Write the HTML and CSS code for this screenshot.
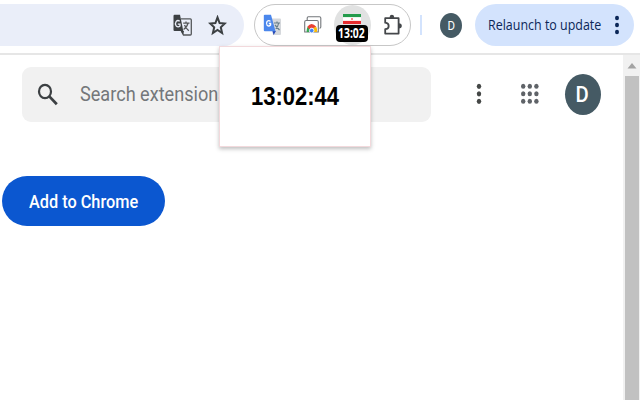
FILE: index.html
```
<!DOCTYPE html>
<html lang="en">
<head>
<meta charset="utf-8">
<title>Clock extension</title>
<link rel="stylesheet" href="styles.css">
</head>
<body>
<header class="toolbar">
  <div class="address">
    <svg class="translate" width="20" height="23" viewBox="0 0 20 23">
      <path d="M1.5 .8H7L10.3 17H1.5Q.5 17 .5 16V2Q.5 .8 1.5 .8Z" fill="#3c4043"/>
      <path d="M8 4.8H17.3Q18.3 4.8 18.3 6V20Q18.3 21 17.3 21H10.5L8.3 17" fill="none" stroke="#55585b" stroke-width="1.3"/>
      <path d="M7.8 17H11L10.2 20.8Z" fill="#3c4043"/>
      <path d="M6.7 7.2Q4.8 5.8 3.2 7.4Q1.6 9.7 3.2 12Q5.2 13.8 7 12V10.2H4.8" fill="none" stroke="#eceffa" stroke-width="1.3"/>
      <path d="M10.2 9.2H16.5M13 7.5V9.2M15 9.2Q14 13.5 10.6 15.5M11.5 11Q12.8 14.2 15.8 16.8" fill="none" stroke="#55585b" stroke-width="1.3"/>
    </svg>
    <svg class="star" width="19" height="21" viewBox="0 0 19 21">
      <path d="M9.5 2.4L11.6 8L16.8 8.5L12.8 12.3L14.1 18L9.5 15L4.9 18L6.2 12.3L2.2 8.5L7.4 8Z" fill="none" stroke="#3c4043" stroke-width="2"/>
    </svg>
  </div>
  <div class="extensions">
    <svg width="20" height="23" viewBox="0 0 20 23">
      <path d="M7 4.5H17Q18 4.5 18 5.5V20Q18 21 17 21H10Z" fill="#d5d8dc"/>
      <path d="M9.5 17H13L10.6 21Z" fill="#2749b8"/>
      <path d="M1.8 .8H8L12.5 17.3H1.8Q.8 17.3 .8 16.3V1.8Q.8 .8 1.8 .8Z" fill="#4b87ec"/>
      <path d="M7.5 7.4Q5.8 5.8 4.1 7.4Q2.9 9.5 4.1 11.2Q5.9 12.8 7.6 11V9.5H5.8" fill="none" stroke="#fff" stroke-width="1.3"/>
      <path d="M11 9H17M14 7.5V9M15.7 9Q15 13 12.6 14.5M12 11L16.5 16" fill="none" stroke="#667f8b" stroke-width="1.2"/>
    </svg>
    <svg width="20" height="23" viewBox="0 0 20 23">
      <path d="M4.2 6V4Q4.2 2.8 5.4 2.8H16.5Q17.8 2.8 17.8 4V13Q17.8 14.2 16.5 14.2" fill="#fff" stroke="#73777b" stroke-width="1.1"/>
      <path d="M1.7 18V8Q1.7 6.5 3.1 6.5H14Q15.3 6.5 15.3 8V18Z" fill="#fff" stroke="#73777b" stroke-width="1.1"/>
      <path d="M3.7 18Q3.4 13.5 5.7 11.8L7.2 15.2L6.2 18Z" fill="#35a852"/>
      <path d="M4.4 12.7Q8.5 7.2 13.3 12.8L10.8 14.8Q8.5 12.5 6.4 15.5Z" fill="#e94235"/>
      <path d="M10.8 13.2H13.6Q14.3 15.5 13.9 18H10.5Z" fill="#fabb05"/>
      <ellipse cx="8.7" cy="16.6" rx="2.3" ry="2.3" fill="#4285f4" stroke="#fff" stroke-width=".8"/>
    </svg>
    <div class="active">
      <svg class="flag" width="18" height="10" viewBox="0 0 18 10">
        <path d="M0 0H18V10H0Z" fill="#fff"/>
        <path d="M0 0H18V3.1H0Z" fill="#239b4b"/>
        <path d="M0 6.9H18V10H0Z" fill="#e42c30"/>
        <circle cx="9" cy="5" r="1" fill="#ec6b6b"/>
      </svg>
      <span class="badge"><span class="badge-text">13:02</span></span>
    </div>
    <svg class="puzzle" width="20" height="23" viewBox="0 0 20 23">
      <path d="M2.2 4.2H15.6V19.6H2.2V15.2Q5.7 15 5.7 12Q5.7 9 2.2 8.7Z" fill="none" stroke="#44474a" stroke-width="1.8" stroke-linejoin="round"/>
      <path d="M6.7 4V2.8Q6.8 .8 8.9 .8Q11 .8 11.1 2.8V4ZM15.8 9.2Q18.8 9.2 18.8 11.8Q18.8 14.4 15.8 14.4Z" fill="#44474a"/>
    </svg>
  </div>
  <span class="divider"></span>
  <span class="avatar small"><span>D</span></span>
  <div class="relaunch">
    <span class="relaunch-text">Relaunch to update</span>
    <svg class="more" width="6" height="20" viewBox="0 0 6 20" fill="#0b2758">
      <ellipse cx="3" cy="3" rx="2" ry="2.2"/><ellipse cx="3" cy="10" rx="2" ry="2.2"/><ellipse cx="3" cy="17" rx="2" ry="2.2"/>
    </svg>
  </div>
</header>
<div class="page">
  <main class="content">
    <div class="store-bar">
      <div class="search">
        <svg width="22" height="23" viewBox="0 0 22 23">
          <ellipse cx="8" cy="8.5" rx="6" ry="6.6" fill="none" stroke="#3c4043" stroke-width="2.2"/>
          <path d="M12.3 13.4L19.8 21.3" stroke="#3c4043" stroke-width="2.7"/>
        </svg>
        <span class="search-text">Search extensions</span>
      </div>
      <svg class="store-more" width="6" height="22" viewBox="0 0 6 22" fill="#444746">
        <ellipse cx="3" cy="3.3" rx="2.2" ry="2.6"/><ellipse cx="3" cy="10.8" rx="2.2" ry="2.6"/><ellipse cx="3" cy="18.3" rx="2.2" ry="2.6"/>
      </svg>
      <svg class="apps" width="20" height="22" viewBox="0 0 20 22" fill="#5f6368">
        <ellipse cx="3.2" cy="3.3" rx="2.2" ry="2.5"/><ellipse cx="9.8" cy="3.3" rx="2.2" ry="2.5"/><ellipse cx="16.4" cy="3.3" rx="2.2" ry="2.5"/>
        <ellipse cx="3.2" cy="10.8" rx="2.2" ry="2.5"/><ellipse cx="9.8" cy="10.8" rx="2.2" ry="2.5"/><ellipse cx="16.4" cy="10.8" rx="2.2" ry="2.5"/>
        <ellipse cx="3.2" cy="18.3" rx="2.2" ry="2.5"/><ellipse cx="9.8" cy="18.3" rx="2.2" ry="2.5"/><ellipse cx="16.4" cy="18.3" rx="2.2" ry="2.5"/>
      </svg>
      <span class="avatar large"><span>D</span></span>
    </div>
    <div class="add"><span class="add-text">Add to Chrome</span></div>
  </main>
  <div class="scrollbar">
    <svg width="10" height="6" viewBox="0 0 10 6"><path d="M5 0L9.5 5.5H.5Z" fill="#a3a3a3"/></svg>
    <span class="thumb"></span>
  </div>
</div>
<div class="popup"><span class="clock">13:02:44</span></div>
</body>
</html>
```
FILE: styles.css
```
* { box-sizing: border-box; }
body {
  margin: 0;
  width: 640px;
  height: 400px;
  overflow: hidden;
  background: #fff;
  font-family: Roboto, "Liberation Sans", sans-serif;
}
svg { display: block; flex: none; }
.toolbar {
  display: flex;
  align-items: center;
  height: 55px;
  padding-bottom: 3px;
  border-bottom: 2px solid #e6e6e6;
}
.address {
  display: flex;
  align-items: center;
  width: 243.5px;
  height: 42px;
  padding-left: 172.5px;
  border-radius: 0 21px 21px 0;
  background: #eaeef9;
}
.star { margin-left: 15.5px; }
.extensions {
  display: flex;
  align-items: center;
  width: 157px;
  height: 42px;
  margin-left: 10px;
  padding-left: 8px;
  border: 1px solid #c7c7c7;
  border-radius: 21px;
  gap: 20px;
}
.active {
  position: relative;
  width: 37px;
  height: 40px;
  margin-left: -9px;
  border-radius: 50%;
  background: #e1e2e2;
}
.flag { margin: 9px 0 0 9px; }
.badge {
  position: absolute;
  left: 2px;
  top: 20px;
  display: flex;
  align-items: center;
  justify-content: center;
  width: 32px;
  height: 17px;
  border-radius: 4px;
  background: #000;
}
.badge-text {
  color: #fff;
  font: bold 13.5px/17px "Open Sans", sans-serif;
  transform: scaleX(.77);
}
.puzzle { margin-left: -8px; }
.divider {
  width: 2px;
  height: 20px;
  margin-left: 9.5px;
  background: #d3e3fd;
}
.avatar {
  display: flex;
  align-items: center;
  justify-content: center;
  flex: none;
  border-radius: 50%;
  background: #455a64;
  color: #fff;
}
.small {
  width: 22px;
  height: 25px;
  margin-left: 18px;
  font-size: 13px;
}
.small span { transform: scaleX(.88); }
.relaunch {
  display: flex;
  align-items: center;
  width: 159px;
  height: 42px;
  margin-left: 13px;
  padding-left: 13px;
  border-radius: 21px;
  background: #d3e3fd;
}
.relaunch-text {
  width: 125.5px;
  color: #0b2758;
  font: 14px/20px "Open Sans", sans-serif;
  white-space: nowrap;
  transform: scaleX(.89);
  transform-origin: left;
}
.page { display: flex; height: 345px; }
.content { flex: 1; }
.store-bar { display: flex; align-items: center; padding-top: 12px; }
.search {
  display: flex;
  align-items: center;
  width: 408.5px;
  height: 54.5px;
  margin-left: 22px;
  padding-left: 15px;
  border-radius: 9px;
  background: #f1f1f1;
}
.search-text {
  margin-left: 20.5px;
  color: #74777a;
  font-size: 20px;
  line-height: 24px;
  white-space: nowrap;
  transform: scaleX(.905);
  transform-origin: left;
}
.store-more { margin-left: 45.5px; }
.apps { margin-left: 38px; }
.large { width: 36px; height: 41px; margin-left: 24.5px; font-size: 22px; font-weight: 500; }
.large span { transform: scaleX(.92); }
.add {
  display: flex;
  align-items: center;
  width: 162.5px;
  height: 50px;
  margin: 54.5px 0 0 2px;
  padding-left: 26.5px;
  border-radius: 25px;
  background: #0b57d0;
}
.add-text {
  color: #fff;
  font-size: 18px;
  font-weight: 500;
  white-space: nowrap;
  transform: scaleX(.905);
  transform-origin: left;
}
.scrollbar {
  display: flex;
  flex-direction: column;
  align-items: center;
  width: 17px;
  padding-top: 8px;
  background: #f1f1f1;
}
.thumb { flex: 1; width: 14px; margin-top: 7px; background: #c1c1c1; }
.popup {
  position: absolute;
  left: 218.5px;
  top: 46px;
  display: flex;
  align-items: center;
  justify-content: center;
  width: 152.5px;
  height: 101px;
  padding-bottom: 2px;
  border: 1px solid #f2d9dc;
  background: #fff;
  box-shadow: 0 2px 4px rgba(0, 0, 0, .25);
}
.clock {
  color: #000;
  font: bold 25px/30px "Liberation Sans", sans-serif;
  transform: scaleX(.88);
}
```
